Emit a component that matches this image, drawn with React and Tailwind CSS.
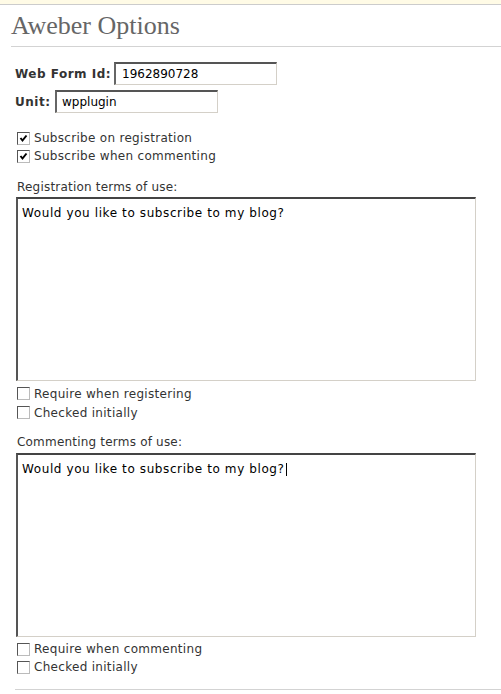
import React from "react";

function Box({ checked }) {
  return (
    <span className="ml-[2px] w-[13px] h-[13px] shrink-0 bg-white border border-t-[#555] border-l-[#555] border-r-[#bbb] border-b-[#bbb] flex items-center justify-center">
      {checked && (
        <svg width="9" height="9" viewBox="0 0 9 9">
          <path d="M1.5 4 L3.5 6.5 L7.5 1.5" stroke="#000" strokeWidth="2" fill="none" />
        </svg>
      )}
    </span>
  );
}

function Check({ checked, label, h = "h-[18px]" }) {
  return (
    <div className={`flex items-center gap-[4px] ${h}`}>
      <Box checked={checked} />
      <span className="text-[12px] tracking-[0.3px] text-[#333] leading-none">{label}</span>
    </div>
  );
}

function Area({ cursor }) {
  return (
    <div className="ml-[1px] w-[460px] h-[184px] bg-white border-t-2 border-l-2 border-t-[#444] border-l-[#555] border-r border-b border-r-[#d4d0c8] border-b-[#d4d0c8] pl-[4px] pt-[1px]">
      <span className="text-[12px] tracking-[0.6px] leading-[16px] text-black">
        Would you like to subscribe to my blog?
        {cursor && <span className="inline-block w-[1px] h-[13px] bg-black align-middle ml-[1px]" />}
      </span>
    </div>
  );
}

export default function App() {
  return (
    <div
      className="w-[501px] h-[694px] bg-white overflow-hidden"
      style={{ fontFamily: '"DejaVu Sans", Verdana, sans-serif' }}
    >
      <div className="h-[4px] bg-[#fffbe6] border-b border-[#ccc] box-content" />
      <div className="ml-[11px] h-[42px] border-b border-[#d3d3d3]">
        <h2
          className="text-[26px] leading-[30px] pt-[6px] text-[#666]"
          style={{ fontFamily: '"Liberation Serif", Georgia, serif' }}
        >
          Aweber Options
        </h2>
      </div>
      <div className="pl-[15px] pt-[15px]">
        <div className="flex items-center h-[23px]">
          <span className="shrink-0 w-[99px] text-[12px] tracking-[0.5px] font-bold text-[#333]">Web Form Id:</span>
          <div className="shrink-0 w-[163px] h-[23px] border-t-2 border-l-2 border-t-[#555] border-l-[#666] border-r border-b border-r-[#d4d0c8] border-b-[#d4d0c8] flex items-center pl-[6px] text-[12px] text-black">
            1962890728
          </div>
        </div>
        <div className="flex items-center h-[23px] mt-[5px]">
          <span className="shrink-0 w-[40px] text-[12px] tracking-[0.5px] font-bold text-[#333]">Unit:</span>
          <div className="shrink-0 w-[163px] h-[23px] border-t-2 border-l-2 border-t-[#555] border-l-[#666] border-r border-b border-r-[#d4d0c8] border-b-[#d4d0c8] flex items-center pl-[5px] text-[12px] text-black">
            wpplugin
          </div>
        </div>
        <div className="mt-[16px]">
          <Check checked label="Subscribe on registration" />
          <Check checked label="Subscribe when commenting" />
        </div>
        <div className="mt-[14px] h-[16px] flex items-center ml-[2px] text-[12px] tracking-[0.2px] text-[#333]">
          Registration terms of use:
        </div>
        <div className="mt-[2px]">
          <Area />
        </div>
        <div className="mt-[3px]">
          <Check label="Require when registering" h="h-[19px]" />
          <Check label="Checked initially" h="h-[19px]" />
        </div>
        <div className="mt-[12px] h-[16px] flex items-center ml-[2px] text-[12px] tracking-[0.2px] text-[#333]">
          Commenting terms of use:
        </div>
        <div className="mt-[3px]">
          <Area cursor />
        </div>
        <div className="mt-[3px]">
          <Check label="Require when commenting" />
          <Check label="Checked initially" />
        </div>
        <div className="mt-[13px] border-t border-[#d3d3d3]" />
      </div>
    </div>
  );
}
